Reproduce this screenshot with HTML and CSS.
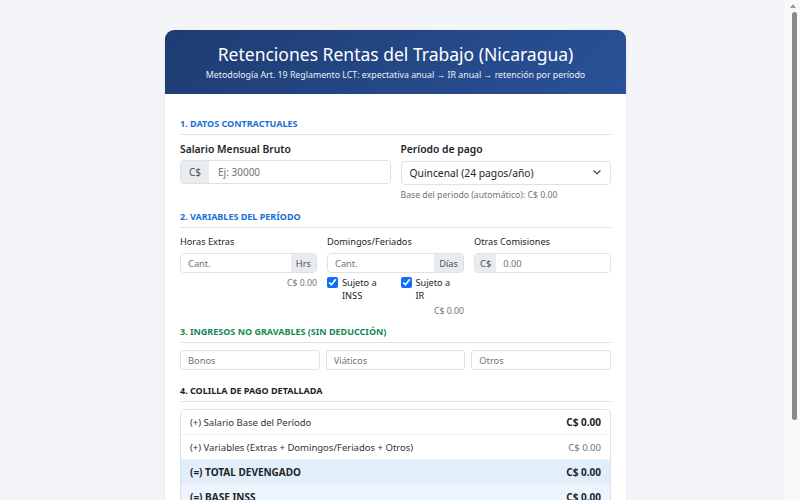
FILE: index.html
```html
<!DOCTYPE html>
<html lang="es">
<head>
<meta charset="utf-8">
<title>Retenciones Rentas del Trabajo</title>
<link rel="stylesheet" href="styles.css">
</head>
<body>
<div class="card">
  <header class="card-head">
    <h1>Retenciones Rentas del Trabajo (Nicaragua)</h1>
    <p>Metodología Art. 19 Reglamento LCT: expectativa anual → IR anual → retención por período</p>
  </header>
  <div class="card-body">
    <h2 class="sec sec-blue">1. Datos Contractuales</h2>
    <div class="grid2">
      <div>
        <label class="lbl-strong">Salario Mensual Bruto</label>
        <div class="igroup big">
          <span class="addon">C$</span>
          <input type="text" placeholder="Ej: 30000">
        </div>
      </div>
      <div>
        <label class="lbl-strong">Período de pago</label>
        <div class="select-wrap">
          <select><option>Quincenal (24 pagos/año)</option></select>
          <svg class="chev" viewBox="0 0 16 16" width="10" height="10"><path d="M3 6l5 5 5-5" fill="none" stroke="#343a40" stroke-width="1.8" stroke-linecap="round" stroke-linejoin="round"/></svg>
        </div>
        <div class="help">Base del periodo (automático): C$ 0.00</div>
      </div>
    </div>

    <h2 class="sec sec-blue sec2">2. Variables del Período</h2>
    <div class="grid3">
      <div>
        <label class="lbl">Horas Extras</label>
        <div class="igroup">
          <input type="text" placeholder="Cant.">
          <span class="addon">Hrs</span>
        </div>
        <div class="amt">C$ 0.00</div>
      </div>
      <div>
        <label class="lbl">Domingos/Feriados</label>
        <div class="igroup">
          <input type="text" placeholder="Cant.">
          <span class="addon">Días</span>
        </div>
        <div class="checks">
          <label class="chk"><input type="checkbox" checked><span>Sujeto a INSS</span></label>
          <label class="chk"><input type="checkbox" checked><span>Sujeto a IR</span></label>
        </div>
        <div class="amt">C$ 0.00</div>
      </div>
      <div>
        <label class="lbl">Otras Comisiones</label>
        <div class="igroup">
          <span class="addon">C$</span>
          <input type="text" placeholder="0.00">
        </div>
      </div>
    </div>

    <h2 class="sec sec-green">3. Ingresos No Gravables (Sin Deducción)</h2>
    <div class="grid3n">
      <input class="plain" type="text" placeholder="Bonos">
      <input class="plain" type="text" placeholder="Viáticos">
      <input class="plain" type="text" placeholder="Otros">
    </div>

    <h2 class="sec sec-dark">4. Colilla de Pago Detallada</h2>
    <div class="slip">
      <div class="row"><span>(+) Salario Base del Período</span><b>C$ 0.00</b></div>
      <div class="row"><span>(+) Variables (Extras + Domingos/Feriados + Otros)</span><span class="val">C$ 0.00</span></div>
      <div class="row total"><span>(=) TOTAL DEVENGADO</span><span>C$ 0.00</span></div>
      <div class="row base"><span>(=) BASE INSS</span><span>C$ 0.00</span></div>
      <div class="row"><span>(-) INSS Laboral (7%)</span><span class="val red">C$ 0.00</span></div>
    </div>
  </div>
</div>
<div class="fake-scroll" aria-hidden="true">
  <span class="fs-arrow"></span>
  <span class="fs-thumb"></span>
</div>
</body>
</html>
```
FILE: styles.css
```css
* { box-sizing: border-box; }
html, body { margin: 0; padding: 0; }
body {
  background: #f3f5f8;
  font-family: "Noto Sans", "Open Sans", sans-serif;
  color: #212529;
  padding-right: 9px;
}
.card {
  width: 461px;
  margin: 30px auto 30px;
  background: #fff;
  border-radius: 9px;
  overflow: hidden;
  box-shadow: 0 1px 4px rgba(0,0,0,0.06);
}
.card-head {
  background: linear-gradient(135deg, #1e3c72 0%, #2a5298 100%);
  color: #fff;
  text-align: center;
  padding: 12px 10px 12px;
}
.card-head h1 {
  margin: 0;
  font-size: 17.5px;
  font-weight: 400;
  line-height: 24px;
}
.card-head p {
  margin: 3px 0 0;
  font-size: 8.8px;
  line-height: 13px;
  opacity: 0.92;
}
.card-body { padding: 23px 15px 15px; }

.sec {
  margin: 0 0 7px;
  padding-bottom: 4px;
  border-bottom: 1px solid #dee2e6;
  font-size: 9px;
  font-weight: 700;
  letter-spacing: 0;
  text-transform: uppercase;
  line-height: 13px;
}
.sec2 { margin-bottom: 8px; }
.sec-blue { color: #1a6fd9; }
.sec-green { color: #198754; }
.sec-dark { color: #212529; }

.grid2 {
  display: grid;
  grid-template-columns: repeat(2, minmax(0, 1fr));
  gap: 10px;
  margin-bottom: 9px;
}
.grid3 {
  display: grid;
  grid-template-columns: repeat(3, minmax(0, 1fr));
  gap: 10px;
  margin-bottom: 8px;
}
.grid3n {
  display: grid;
  grid-template-columns: repeat(3, minmax(0, 1fr));
  gap: 6px;
  margin-bottom: 14px;
}
.lbl-strong {
  display: block;
  font-size: 10.3px;
  font-weight: 600;
  line-height: 14px;
  margin: 0 0 4px;
}
.lbl {
  display: block;
  font-size: 9.2px;
  line-height: 12px;
  margin: 0 0 5px;
  color: #212529;
}
.igroup {
  display: flex;
  height: 20px;
  border: 1px solid #dee2e6;
  border-radius: 4px;
  overflow: hidden;
  background: #fff;
}
.igroup.big { height: 24px; }
.igroup input {
  flex: 1;
  min-width: 0;
  border: 0;
  outline: 0;
  padding: 0 7px;
  font: inherit;
  font-size: 9.3px;
  color: #212529;
  background: #fff;
}
.igroup.big input { font-size: 10px; padding: 0 9px; }
.addon {
  display: flex;
  align-items: center;
  padding: 0 5px;
  background: #e9ecef;
  color: #495057;
  font-size: 9.3px;
}
.igroup.big .addon { padding: 0 8px; font-size: 10px; }
input::placeholder { color: #6c757d; opacity: 1; }

.select-wrap { position: relative; }
.select-wrap select {
  appearance: none;
  -webkit-appearance: none;
  width: 100%;
  height: 24px;
  border: 1px solid #dee2e6;
  border-radius: 4px;
  background: #fff;
  font: inherit;
  font-size: 10.3px;
  padding: 0 24px 0 8px;
  color: #212529;
}
.chev {
  position: absolute;
  right: 9px;
  top: 7px;
  pointer-events: none;
}
.help {
  font-size: 8.7px;
  color: #6c757d;
  margin-top: 4px;
  line-height: 12px;
}
.amt {
  text-align: right;
  font-size: 8.7px;
  color: #6c757d;
  margin-top: 4px;
  line-height: 12px;
}
.checks {
  display: flex;
  gap: 10px;
  margin-top: 3px;
}
.chk {
  display: flex;
  align-items: flex-start;
  gap: 4px;
  flex: 1;
  font-size: 9.2px;
  line-height: 13px;
}
.chk input {
  margin: 1px 0 0;
  width: 11px;
  height: 11px;
  accent-color: #0d6efd;
  flex: none;
}
.chk span { width: 40px; }
.checks + .amt { margin-top: 3px; }

input.plain {
  height: 20px;
  border: 1px solid #dee2e6;
  border-radius: 3px;
  padding: 0 7px;
  font: inherit;
  font-size: 9.3px;
  outline: 0;
  min-width: 0;
}

.slip {
  border: 1px solid #dee2e6;
  border-radius: 5px;
  overflow: hidden;
}
.row {
  display: flex;
  justify-content: space-between;
  align-items: center;
  height: 25px;
  padding: 0 9px;
  border-bottom: 1px solid #eceff2;
  font-size: 9.5px;
  color: #333;
}
.row:last-child { border-bottom: 0; }
.row b { font-weight: 700; color: #212529; font-size: 10px; }
.row .val { color: #6c757d; }
.row .val.red { color: #dc3545; }
.row.total { background: #e2effb; font-weight: 700; color: #212529; font-size: 10px; }
.row.base { background: #ecf5fd; font-weight: 700; color: #212529; font-size: 10px; }

/* emulated browser scrollbar (browser chrome in the reference) */
.fake-scroll {
  position: fixed;
  top: 0;
  right: 0;
  width: 15px;
  height: 100%;
  background: #f8f9fb;
}
.fs-arrow {
  position: absolute;
  top: 4px;
  left: 5px;
  width: 0;
  height: 0;
  border-left: 3px solid transparent;
  border-right: 3px solid transparent;
  border-bottom: 4px solid #9a9a9a;
}
.fs-thumb {
  position: absolute;
  top: 12px;
  left: 7px;
  width: 5px;
  height: 408px;
  background: #8a8a8a;
  border-radius: 3px;
}
```
